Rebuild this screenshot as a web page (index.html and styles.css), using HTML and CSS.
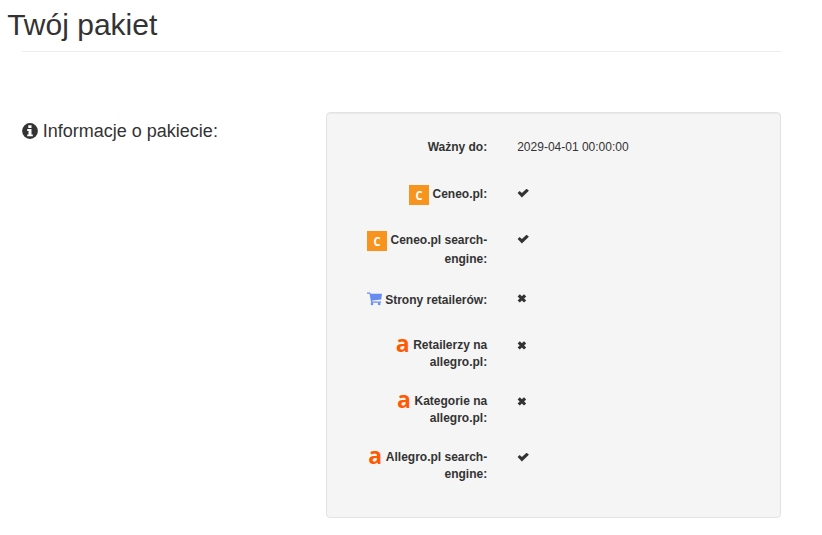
FILE: index.html
```html
<!DOCTYPE html>
<html lang="pl">
<head>
<meta charset="utf-8">
<title>Twój pakiet</title>
<link rel="stylesheet" href="styles.css">
</head>
<body>
<svg class="defs" width="0" height="0">
  <symbol id="check" viewBox="0 0 12 9"><path d="M.6 4 2.6 1.9 4.9 4.1 9.6-.3 11.9 1.8 4.9 8.5Z"/></symbol>
  <symbol id="cross" viewBox="0 0 10 9"><path d="M.6 2.4 2.8.2 4.9 2.3 7 .2 9.2 2.4 7.1 4.4 9.2 6.4 7 8.6 4.9 6.5 2.8 8.6.6 6.4 2.7 4.4Z"/></symbol>
</svg>
<header>
  <h1>Twój pakiet</h1>
</header>
<main>
  <h2>
    <svg class="info" viewBox="0 0 16 16"><circle cx="8" cy="8" r="7.9"/><path d="M6.3 2.3h3.2v2.6H6.3zM5.2 6h4.3v5.4h1.3v1.9H5.2v-1.9h1.3V7.9H5.2z" fill="#fff"/></svg>
    Informacje o pakiecie:
  </h2>
  <section class="well">
    <div class="row h47"><b>Ważny do:</b><span>2029-04-01 00:00:00</span></div>
    <div class="row h46"><b><i class="ceneo"><span>C</span></i>Ceneo.pl:</b><svg class="check"><use href="#check"/></svg></div>
    <div class="row h60 loose"><b><i class="ceneo"><span>C</span></i>Ceneo.pl search-<br>engine:</b><svg class="check"><use href="#check"/></svg></div>
    <div class="row h45"><b><svg class="cart" viewBox="0 0 16 14"><path d="M0 0h3.3l.6 1.5H16l-.8 6L5.5 8.6l.3 1H15v1.3H4.5L2.7 1.3H0z"/><circle cx="5.3" cy="12.2" r="1.4"/><circle cx="13" cy="12.2" r="1.4"/></svg>Strony retailerów:</b><svg class="cross high"><use href="#cross"/></svg></div>
    <div class="row h56"><b><i class="allegro">a</i>Retailerzy na<br>allegro.pl:</b><svg class="cross"><use href="#cross"/></svg></div>
    <div class="row h56"><b><i class="allegro">a</i>Kategorie na<br>allegro.pl:</b><svg class="cross"><use href="#cross"/></svg></div>
    <div class="row h56"><b><i class="allegro">a</i>Allegro.pl search-<br>engine:</b><svg class="check low"><use href="#check"/></svg></div>
  </section>
</main>
</body>
</html>
```
FILE: styles.css
```css
* { box-sizing: border-box; }
body {
  margin: 0;
  background: #fff;
  color: #333;
  font: 12px/17px "Liberation Sans", Arial, sans-serif;
}
.defs { display: block; }
header {
  height: 52px;
  padding-top: 8px;
  margin: 0 41px 60px 22px;
  border-bottom: 1px solid #eee;
}
h1 {
  margin: 0 0 0 -14.8px;
  font-size: 30px;
  font-weight: 400;
  line-height: 33px;
}
main {
  display: grid;
  grid-template-columns: 304px 455px;
  margin-left: 22px;
}
h2 {
  display: flex;
  align-items: center;
  gap: 4.8px;
  height: 20px;
  margin: 9px 0 0;
  font-size: 18px;
  font-weight: 400;
  line-height: 20px;
}
.info { width: 16px; height: 16px; fill: #333; }
.well {
  height: 406px;
  padding: 26px 18px 0 19px;
  background: #f5f5f5;
  border: 1px solid #e3e3e3;
  border-radius: 4px;
  box-shadow: inset 0 1px 1px rgba(0, 0, 0, .05);
}
.row {
  display: grid;
  grid-template-columns: 141.2px 1fr;
  column-gap: 30px;
  align-items: start;
}
.row b { text-align: right; }
.h45 { height: 45px; }
.h46 { height: 46px; }
.h47 { height: 47px; }
.h56 { height: 56px; }
.h60 { height: 60px; }
.loose b { line-height: 19px; margin-top: -1px; }
.check { width: 12px; height: 9px; margin-top: 3px; fill: #333; overflow: visible; }
.low { margin-top: 4px; }
.cross { width: 10px; height: 9px; margin-top: 4px; fill: #333; }
.high { margin-top: 2px; }
.ceneo {
  display: inline-block;
  width: 20px;
  height: 20px;
  margin: -2px 3.5px -6px 0;
  position: relative;
  top: -5px;
  vertical-align: -7px;
  background: #f7941e;
  color: #fff;
  font: 700 13px/20px "Open Sans", sans-serif;
  text-align: center;
}
.ceneo span { display: block; transform: scaleX(.85); }
.loose .ceneo { vertical-align: -6px; top: -4px; margin-bottom: -7px; }
.cart {
  width: 15px;
  height: 14px;
  margin: -2px 3px -2px 0;
  position: relative;
  top: -2px;
  vertical-align: -2px;
  fill: #668cf0;
}
.allegro {
  display: inline-block;
  width: 12px;
  height: 14px;
  margin: -2px 5.5px -2px 0;
  position: relative;
  top: 1px;
  vertical-align: -2px;
  color: #ff5a00;
  font: 700 23px/10px "Open Sans", sans-serif;
}
```
